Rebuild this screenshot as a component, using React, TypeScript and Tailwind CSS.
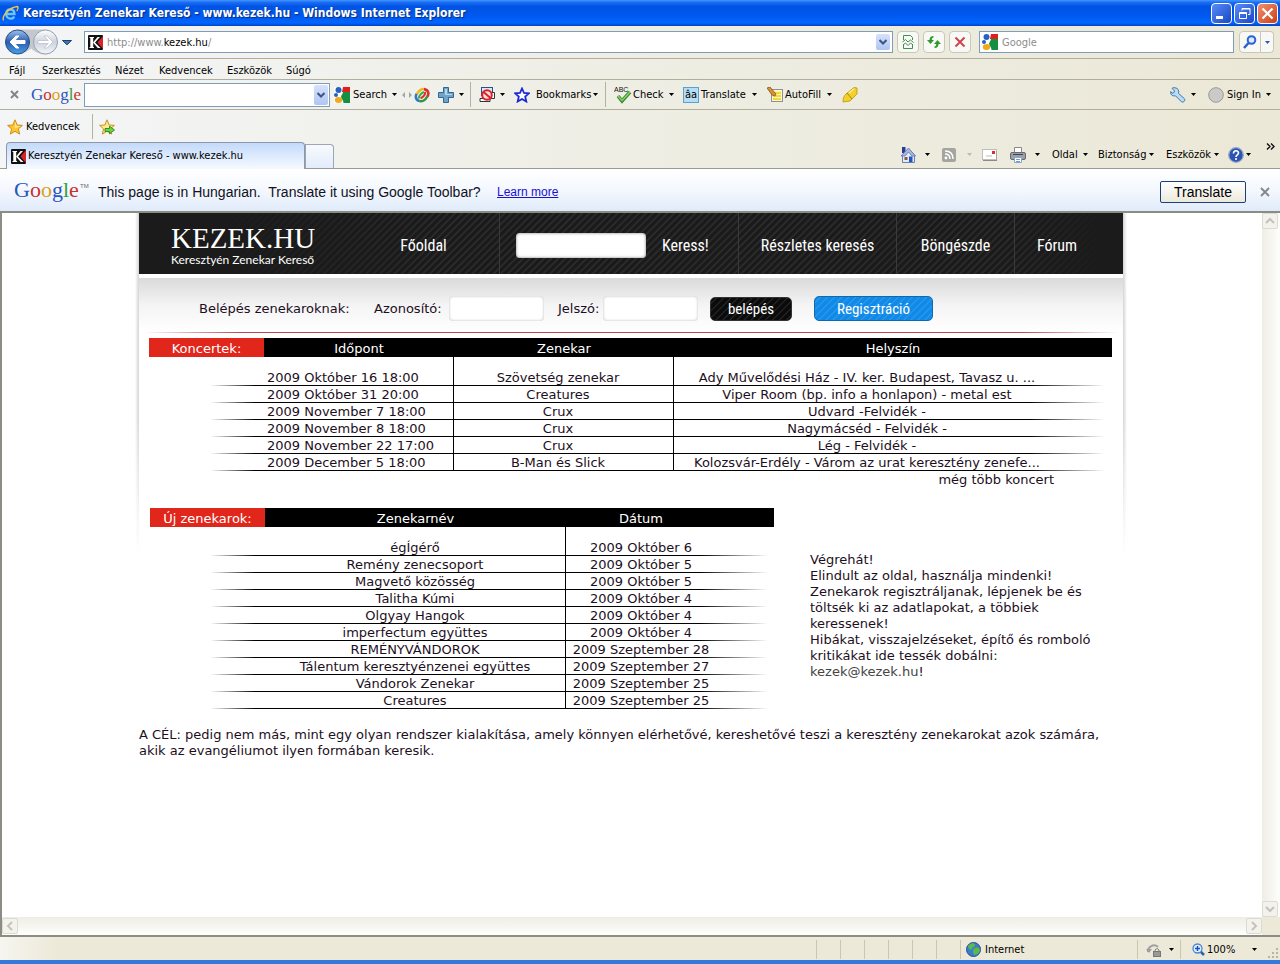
import type { ReactNode } from "react";

const concerts = [
  ["2009 Október 16 18:00", "Szövetség zenekar", "Ady Művelődési Ház - IV. ker. Budapest, Tavasz u. ..."],
  ["2009 Október 31 20:00", "Creatures", "Viper Room (bp. info a honlapon) - metal est"],
  ["2009 November 7 18:00", "Crux", "Udvard -Felvidék -"],
  ["2009 November 8 18:00", "Crux", "Nagymácséd - Felvidék -"],
  ["2009 November 22 17:00", "Crux", "Lég - Felvidék -"],
  ["2009 December 5 18:00", "B-Man és Slick", "Kolozsvár-Erdély - Várom az urat keresztény zenefe..."],
];

const bands = [
  ["égÍgérő", "2009 Október 6"],
  ["Remény zenecsoport", "2009 Október 5"],
  ["Magvető közösség", "2009 Október 5"],
  ["Talitha Kúmi", "2009 Október 4"],
  ["Olgyay Hangok", "2009 Október 4"],
  ["imperfectum együttes", "2009 Október 4"],
  ["REMÉNYVÁNDOROK", "2009 Szeptember 28"],
  ["Tálentum keresztyénzenei együttes", "2009 Szeptember 27"],
  ["Vándorok Zenekar", "2009 Szeptember 25"],
  ["Creatures", "2009 Szeptember 25"],
];

function Caret({ className = "text-black" }: { className?: string }) {
  return (
    <svg className={`h-[3px] w-[5px] shrink-0 ${className}`} viewBox="0 0 5 3" fill="currentColor">
      <path d="M0 0h5L2.5 3z" />
    </svg>
  );
}

function Tool({ w, label, children }: { w: string; label?: string; children?: ReactNode }) {
  return (
    <button type="button" aria-label={label} className={`flex h-full shrink-0 items-center whitespace-nowrap text-left ${w}`}>
      {children}
    </button>
  );
}

function Sep({ className = "mr-2" }: { className?: string }) {
  return <span className={`h-full w-px shrink-0 bg-[#b5b2a2] ${className}`} />;
}

function GoogleWord({ className }: { className: string }) {
  return (
    <span className={`font-['Liberation_Serif',serif] ${className}`}>
      <span className="text-[#2a56c0]">G</span>
      <span className="text-[#c8322f]">o</span>
      <span className="text-[#d8a31a]">o</span>
      <span className="text-[#2a56c0]">g</span>
      <span className="text-[#3a9a3a]">l</span>
      <span className="text-[#c8322f]">e</span>
    </span>
  );
}

function KIcon() {
  return (
    <svg className="size-[15px] shrink-0" viewBox="0 0 15 15">
      <rect width="15" height="15" rx="1" fill="#111" />
      <path d="M15 1v13L9.500 7.500z" fill="#d8232a" />
      <path d="M1.500 2h4.500v1h-.8v9h.8v1h-4.500v-1h.8V3h-.8z" fill="#fff" />
      <path d="M5 7.500 9.500 2H12L7 7.500l5.500 5.500h-2.700z" fill="#fff" />
    </svg>
  );
}

function GoogleIcon() {
  return (
    <svg className="size-4 shrink-0" viewBox="0 0 16 16">
      <rect width="16" height="16" fill="#fff" />
      <path d="M9 0h7v5H8z" fill="#e0201c" />
      <path d="M9 5h7v11H9.500c0-3-2-4-2.500-6 0-2 2-3 2-5z" fill="#149040" />
      <circle cx="4.500" cy="3" r="3" fill="#2563c0" />
      <circle cx="2" cy="8" r="2" fill="#2563c0" />
      <ellipse cx="4.500" cy="13" rx="3.700" ry="3" fill="#f0a81c" />
    </svg>
  );
}

function StarIcon({ arrow = false }: { arrow?: boolean }) {
  return (
    <svg className="size-4 shrink-0" viewBox="0 0 16 16">
      <path d="M8 .8 10.200 6l5.200.4-4 3.500 1.300 5.200L8 12.300l-4.700 2.800 1.300-5.200-4-3.500L5.800 6z" fill={arrow ? "#fbe88a" : "#ffc52a"} stroke="#c98410" strokeWidth=".9" />
      {!arrow && <path d="M8 2.500 9.500 6.800l4 .4L8 9.500z" fill="#ffe792" />}
      {arrow && <path d="M6 9.500h4.500V7.200L15.500 11l-5 3.800v-2.300H6z" fill="#6fd04a" stroke="#2a8a1c" strokeWidth=".9" />}
    </svg>
  );
}

function DropButton({ label }: { label: string }) {
  return (
    <button type="button" aria-label={label} className="flex w-[14px] shrink-0 items-center justify-center self-stretch rounded-xs bg-linear-to-b from-[#d6e2fc] to-[#b0c5f4]">
      <svg className="h-[6px] w-2" viewBox="0 0 8 6" fill="none" stroke="#3d5580" strokeWidth="2">
        <path d="m.5 1 3.500 3.500L7.500 1" />
      </svg>
    </button>
  );
}

function ScrollButton({ label, d }: { label: string; d: string }) {
  return (
    <button type="button" aria-label={label} className="flex size-4 shrink-0 items-center justify-center rounded-xs border border-[#dddbd0] bg-[#f3f2ec]">
      <svg className="size-[10px]" viewBox="0 0 10 10" fill="none" stroke="#c4c3ba" strokeWidth="2">
        <path d={d} />
      </svg>
    </button>
  );
}

function TitleBar() {
  return (
    <header className="flex h-[26px] items-center gap-1 bg-[linear-gradient(#3f97ff_0%,#1a6bf5_10%,#0054e3_25%,#0058ee_60%,#0066ff_88%,#0042c4_100%)] pr-[2px] pl-[2px]">
      <svg className="size-[17px]" viewBox="0 0 17 17" fill="none">
        <path d="M4 9h8.500c0-3-1.800-4.500-4.200-4.500S4.200 6.300 4.200 9s1.800 4.600 4.300 4.600c1.800 0 3-.7 3.700-2.200" stroke="#6cc4f8" strokeWidth="2.300" />
        <path d="M1.500 15.500C-.5 11 7 2.500 15.500 1.500c1 1 .3 3-.8 4.500" stroke="#f5c642" strokeWidth="1.300" />
      </svg>
      <h1 className="flex-1 truncate font-['DejaVu_Sans_Condensed','DejaVu_Sans',sans-serif] text-xs font-bold text-white [text-shadow:1px_1px_1px_#0a2a80]">
        Keresztyén Zenekar Kereső - www.kezek.hu - Windows Internet Explorer
      </h1>
      <div className="flex gap-[2px]">
        <button type="button" aria-label="Kis méret" className="size-[21px] rounded-sm border border-white bg-linear-to-br from-[#5a8cf5] to-[#1a45c8]">
          <svg viewBox="0 0 19 19"><path d="M4 12h7v3H4z" fill="#fff" /></svg>
        </button>
        <button type="button" aria-label="Előző méret" className="size-[21px] rounded-sm border border-white bg-linear-to-br from-[#5a8cf5] to-[#1a45c8]">
          <svg viewBox="0 0 19 19" fill="none" stroke="#fff"><path d="M7 6.500V4.500h8v6h-2M7 5h8M4.500 8.500h7v6h-7zM4 9.500h8" /></svg>
        </button>
        <button type="button" aria-label="Bezárás" className="size-[21px] rounded-sm border border-white bg-linear-to-br from-[#f0906c] to-[#cc3a10]">
          <svg viewBox="0 0 19 19" stroke="#fff" strokeWidth="2.200"><path d="m4.500 4.500 10 10m0-10-10 10" /></svg>
        </button>
      </div>
    </header>
  );
}

function AddressRow() {
  const box = "flex h-[22px] shrink-0 items-center justify-center rounded-sm border border-[#c9c7ba] bg-[#f8f8f4]";
  return (
    <div className="flex h-[33px] items-center border-b border-[#b3ad9c] pr-[6px] pl-1">
      <div className="relative flex w-[58px] shrink-0">
        <svg className="h-7 w-[58px]" viewBox="0 0 58 28">
          <defs>
            <linearGradient id="back" x2="0" y2="1"><stop stopColor="#9cc2ee" /><stop offset=".5" stopColor="#2a5cae" /><stop offset="1" stopColor="#4aa0e8" /></linearGradient>
            <linearGradient id="fwd" x2="0" y2="1"><stop stopColor="#fff" /><stop offset=".5" stopColor="#ccd3dc" /><stop offset="1" stopColor="#f4f7fa" /></linearGradient>
          </defs>
          <path d="M13 1.500h28a12 12 0 0 1 0 25q-7 0-14-6-7 6-14 6z" fill="#c3c8d0" />
          <circle cx="13.500" cy="14" r="12" fill="url(#back)" stroke="#2c4c80" />
          <path d="M6 14l6-6h3l-4.200 4.500H21v3H10.800L15 20h-3z" fill="#fff" stroke="#fff" />
          <circle cx="41.500" cy="14" r="12" fill="url(#fwd)" stroke="#98a2b0" />
          <path d="M49 14l-6-6h-3l4.200 4.500H34v3h10.200L40 20h3z" fill="#fff" stroke="#b4bcc8" strokeWidth=".7" />
        </svg>
        <button type="button" aria-label="Vissza" className="absolute inset-y-0 left-0 w-7" />
        <button type="button" aria-label="Előre" className="absolute inset-y-0 right-0 w-7" />
      </div>
      <button type="button" aria-label="Legutóbbi lapok" className="w-[22px] shrink-0">
        <svg className="h-[5px] w-[10px]" viewBox="0 0 10 5"><path d="M.5.5h9L5 4.800z" fill="#3d7bb5" stroke="#1c3f6e" /></svg>
      </button>
      <div className="flex h-[22px] min-w-0 flex-1 items-center gap-1 border border-[#7f9db9] bg-white py-[2px] pr-[2px] pl-[3px]">
        <KIcon />
        <div className="min-w-0 flex-1 pt-px text-[#8c8c8c]" role="textbox" aria-label="Cím" contentEditable suppressContentEditableWarning>
          http://www.<span className="text-black">kezek.hu</span>/
        </div>
        <DropButton label="Címlista" />
      </div>
      <button type="button" aria-label="Kompatibilitási nézet" className={`ml-1 w-[22px] ${box}`}>
        <svg className="size-[14px]" viewBox="0 0 14 14" fill="none" stroke="#3f9150"><path d="M2.500 5V.5h7l2 2V5M2.500 9v4.500h9V9M1.500 7l3-2.500L7 7l2.500-2 3 2.500M2 10l2.500-2L7 10.500 9.500 8l2.500 2" /></svg>
      </button>
      <button type="button" aria-label="Frissítés" className={`ml-1 w-[22px] ${box}`}>
        <svg className="size-4" viewBox="0 0 16 16" fill="#2f9a2c"><path d="M7.500 2C4.500 2 3.500 4 3.500 6H1l3.500 4L8 6H5.800c0-1.500.5-2.300 1.700-2.500zM8.500 14c3 0 4-2 4-4H15l-3.500-4L8 10h2.200c0 1.500-.5 2.300-1.700 2.500z" /></svg>
      </button>
      <button type="button" aria-label="Leállítás" className={`ml-1 w-[22px] ${box}`}>
        <svg className="size-3" viewBox="0 0 12 12" stroke="#cc4450" strokeWidth="2"><path d="m1.500 1.500 9 9m0-9-9 9" /></svg>
      </button>
      <label className="ml-2 flex h-[22px] w-[255px] items-center gap-1 border border-[#7f9db9] bg-white pl-[2px]">
        <GoogleIcon />
        <input aria-label="Keresés" placeholder="Google" className="min-w-0 flex-1 bg-transparent pt-px outline-none placeholder:text-[#8c8c8c]" />
      </label>
      <button type="button" aria-label="Keresés indítása" className={`ml-[5px] w-[22px] rounded-r-none ${box}`}>
        <svg className="size-[14px]" viewBox="0 0 14 14" fill="none" stroke="#2a62d8" strokeWidth="2"><circle cx="8.500" cy="5" r="3.800" fill="#dceafd" /><path d="m5.500 8-4.500 5" strokeWidth="2.600" /></svg>
      </button>
      <button type="button" aria-label="Keresési beállítások" className={`w-[13px] rounded-l-none border-l-0 ${box}`}>
        <Caret className="text-[#2a56c0]" />
      </button>
    </div>
  );
}

function MenuRow() {
  return (
    <nav className="flex h-[21px] items-center border-b border-[#b3ad9c] pt-1 pl-[9px]">
      <Tool w="w-[33px]">Fájl</Tool>
      <Tool w="w-[73px]">Szerkesztés</Tool>
      <Tool w="w-11">Nézet</Tool>
      <Tool w="w-[68px]">Kedvencek</Tool>
      <Tool w="w-[59px]">Eszközök</Tool>
      <Tool w="w-10">Súgó</Tool>
    </nav>
  );
}

function GoogleToolbar() {
  return (
    <div className="flex h-[30px] items-center border-b border-[#b3ad9c] py-[2px] pr-1 pl-[10px]">
      <Tool w="w-[21px]" label="Eszköztár bezárása">
        <svg className="size-[9px]" viewBox="0 0 9 9" stroke="#858585" strokeWidth="2"><path d="m1 1 7 7m0-7L1 8" /></svg>
      </Tool>
      <Tool w="w-[53px]"><GoogleWord className="text-[17px] leading-5" /></Tool>
      <div className="flex h-6 w-[246px] shrink-0 items-center border border-[#7f9db9] bg-white p-px">
        <input aria-label="Google keresés" className="h-full min-w-0 flex-1 outline-none" />
        <DropButton label="Korábbi keresések" />
      </div>
      <Tool w="ml-1 w-[68px] gap-[3px]">
        <GoogleIcon /><span className="w-[36px]">Search</span><Caret />
      </Tool>
      <svg className="mr-px h-[6px] w-[10px] shrink-0" viewBox="0 0 10 6" fill="#a5a5a5"><path d="M3 0v6L0 3zM7 0v6l3-3z" /></svg>
      <Tool w="w-[25px] pl-px" label="Google+">
        <svg className="size-4" viewBox="0 0 16 16" fill="none" strokeWidth="2.600">
          <path d="M5.500 14C1.500 13 1 9 3 6.500" stroke="#2f7ad0" />
          <path d="M2.800 7C4.500 3.500 8 1.500 10.500 2.200" stroke="#f0b820" />
          <path d="M10 2.100c4.500.4 5.500 4.900 3 7.900" stroke="#d8322f" />
          <path d="M13.200 9.500c-1.700 3.500-5 5.500-8 4.400" stroke="#2f9a3a" />
          <path d="M5 11.500C4.500 9.500 7 6 10 5" stroke="#3aa84a" strokeWidth="2" />
          <path d="M11 4.800c.8 2.200-1.500 5.200-4.500 6.500" stroke="#d8322f" strokeWidth="2" />
        </svg>
      </Tool>
      <Tool w="w-8 gap-[5px]" label="Hozzáadás">
        <svg className="size-4" viewBox="0 0 16 16"><path d="M5.500.5h5v5h5v5h-5v5h-5v-5h-5v-5h5z" fill="#6ea3cc" stroke="#33658f" /><path d="M7 2h2v5h5v1H7z" fill="#b6d6ea" /></svg>
        <Caret />
      </Tool>
      <Sep />
      <Tool w="w-[35px] gap-[5px]" label="Előugró ablakok">
        <svg className="size-4" viewBox="0 0 16 16" fill="none"><rect x="2.500" y=".5" width="11" height="8" fill="#d8e8fa" stroke="#28528c" /><path d="M12 5.500h3.500v6H12M1 11.500h10v3H1z" fill="#fff" stroke="#333" /><circle cx="8" cy="8" r="4.800" fill="#fbdada" stroke="#d8222a" strokeWidth="2" /><path d="m4.500 5 7 6" stroke="#d8222a" strokeWidth="2" /></svg>
        <Caret />
      </Tool>
      <Tool w="w-[91px]">
        <svg className="size-4 shrink-0" viewBox="0 0 16 16"><path d="M8 1.500 10 6l4.800.4-3.600 3.200 1.100 4.900L8 12l-4.300 2.500 1.100-4.900L1.200 6.400 6 6z" fill="#fff" stroke="#1a28d8" strokeWidth="1.800" /></svg>
        <span className="ml-[6px] w-[57px]">Bookmarks</span><Caret />
      </Tool>
      <Sep />
      <Tool w="w-[69px]">
        <svg className="size-[18px] shrink-0" viewBox="0 0 18 18"><text x="0" y="6" fontSize="7" fontFamily="Liberation Sans" fill="#111">ABC</text><path d="m4 10 4 5 8-9" fill="none" stroke="#3c8a2c" strokeWidth="3.500" /><path d="m4 10 4 4.500L16 6" fill="none" stroke="#8fd070" strokeWidth="1.500" /></svg>
        <span className="ml-px w-9">Check</span><Caret />
      </Tool>
      <Tool w="w-[84px]">
        <span className="flex size-4 shrink-0 items-center justify-center border border-[#5c9fd0] bg-[#b8def6] leading-3">âa</span>
        <span className="ml-[2px] w-[51px]">Translate</span><Caret />
      </Tool>
      <Tool w="w-[75px]">
        <svg className="size-4 shrink-0" viewBox="0 0 16 16"><rect x="4.500" y="2.500" width="11" height="12" fill="#fff8b0" stroke="#8a8fa8" /><path d="M6 6h8M6 9h8M6 12h8" stroke="#f0d840" strokeWidth="2" /><path d="m0 1 3-1 6 7-1 2-3-1z" fill="#d89030" stroke="#7a4c18" strokeWidth=".7" /></svg>
        <span className="ml-[2px] w-[42px]">AutoFill</span><Caret />
      </Tool>
      <Tool w="w-5" label="Kiemelés">
        <svg className="size-4" viewBox="0 0 16 16"><path d="M1 15c0-4 1-6 3-8l8-6.500 3 .5v6L8 14z" fill="#f5cf2a" stroke="#b8960c" strokeWidth=".8" /><path d="m5 6 5 6" stroke="#a8860c" /><path d="m6.500 5.500 5-4 1 .5-5 4.500z" fill="#fff0a0" /></svg>
      </Tool>
      <div className="ml-auto flex h-full">
        <Tool w="w-[38px] gap-[5px]" label="Beállítások">
          <svg className="size-4" viewBox="0 0 16 16"><path d="M5 .8C3.500.5 2.500 1 2 1.300L4.500 4 3.800 5.800 2 6.200.8 4.500C0 7 2 9.500 5.500 8.800l6 6c2 1 4-1 3-3l-6-5.500C9.300 3.500 8 1 5 .8z" fill="#bcdcf4" stroke="#3b78ac" /></svg>
          <Caret />
        </Tool>
        <Tool w="w-[68px]">
          <svg className="size-4 shrink-0" viewBox="0 0 16 16"><circle cx="8" cy="8" r="7.300" fill="#cbcac6" stroke="#999" /></svg>
          <span className="ml-[3px] w-[39px]">Sign In</span><Caret />
        </Tool>
      </div>
    </div>
  );
}

function FavoritesRow() {
  return (
    <div className="flex h-8 items-center pt-1 pb-[3px] pl-[7px]">
      <Tool w="w-[85px] gap-[3px]"><StarIcon />Kedvencek</Tool>
      <Sep className="mr-[6px]" />
      <Tool w="w-5" label="Hozzáadás a Kedvencekhez"><StarIcon arrow /></Tool>
    </div>
  );
}

function TabRow() {
  return (
    <div className="flex h-[27px] items-end border-b border-[#9a9a96] pr-1 pl-[6px]">
      <div className="-mb-px flex h-[27px] w-[299px] shrink-0 items-center gap-[2px] rounded-t-sm border border-b-0 border-[#8d97a8] bg-linear-to-b from-[#c3dafa] to-[#f6faff] pl-1">
        <KIcon />
        Keresztyén Zenekar Kereső - www.kezek.hu
      </div>
      <button type="button" aria-label="Új lap" className="h-6 w-[29px] shrink-0 rounded-tr-sm border border-b-0 border-[#9aa6b8] bg-linear-to-b from-[#f8fafe] to-[#e2ecfa]" />
      <div className="ml-auto flex h-[27px] items-center">
        <Tool w="w-[42px] gap-[9px]" label="Kezdőlap">
          <svg className="size-4" viewBox="0 0 16 16"><path d="M2 0h3.500v6H2z" fill="#2a3c90" /><path d="M2.500 8v7.500h12V8L8.500 2z" fill="#e4eaf6" stroke="#6a80b0" /><path d="M8.500 1 1 9h4l3.500-4L12 9h3.500z" fill="#a8b8dc" stroke="#5a74b4" strokeWidth=".8" /><path d="M9 9.500h3.500V15H9z" fill="#1c58c0" /><path d="M4.500 10h3v3h-3z" fill="#8a5a40" /></svg>
          <Caret />
        </Tool>
        <Tool w="w-10 gap-[11px]" label="Hírcsatornák">
          <svg className="size-[14px]" viewBox="0 0 14 14" fill="none" stroke="#fff" strokeWidth="1.500"><rect width="14" height="14" rx="2" fill="#a5a5a0" stroke="none" /><path d="M3 3c5 0 8 3 8 8M3 6c3 0 5 2 5 5" /><circle cx="4" cy="10" r=".7" /></svg>
          <Caret className="text-[#bdbbb0]" />
        </Tool>
        <Tool w="w-7" label="Levelek">
          <svg className="h-3 w-[15px]" viewBox="0 0 15 12"><rect x=".5" y=".5" width="14" height="10" fill="#fff" stroke="#c0beb6" /><path d="M1 11.500h14V2" stroke="#8c8a84" fill="none" /><path d="M10 2h3v3h-3z" fill="#d82a3a" /><path d="M4 7h6" stroke="#bbb" /></svg>
        </Tool>
        <Tool w="w-[42px] gap-[9px]" label="Nyomtatás">
          <svg className="size-4" viewBox="0 0 16 16"><path d="M4.500.5h7v6h-7z" fill="#fff" stroke="#888" /><rect x=".5" y="5.500" width="15" height="7" rx="1.500" fill="#9a9fa8" stroke="#666b74" /><path d="M3 7.500h10" stroke="#444" /><path d="M4.500 10.500h7v5h-7z" fill="#fff" stroke="#8aa4c4" /><path d="M6 12.500h4M6 14.500h4" stroke="#6aa0d8" /></svg>
          <Caret />
        </Tool>
        <Tool w="w-[46px]"><span className="w-[31px]">Oldal</span><Caret /></Tool>
        <Tool w="w-[68px]"><span className="w-[51px]">Biztonság</span><Caret /></Tool>
        <Tool w="w-[62px]"><span className="w-12">Eszközök</span><Caret /></Tool>
        <Tool w="w-[38px] gap-[2px]" label="Súgó">
          <svg className="size-4" viewBox="0 0 16 16"><circle cx="8" cy="8" r="7.300" fill="#2a55b0" stroke="#98a8c8" strokeWidth="1.300" /><path d="M5.500 6.500C5.500 3 10.500 3 10.500 6c0 1.800-2.500 1.800-2.500 4M8 11v2" fill="none" stroke="#fff" strokeWidth="1.600" /></svg>
          <Caret />
        </Tool>
        <button type="button" aria-label="További gombok" className="mb-4 w-[10px]">
          <svg className="h-[7px] w-[9px]" viewBox="0 0 9 7" fill="none" stroke="#111" strokeWidth="1.400"><path d="m1 .5 3 3-3 3m4-6 3 3-3 3" /></svg>
        </button>
      </div>
    </div>
  );
}

function TranslateBar() {
  return (
    <div className="flex h-11 items-center border-b-2 border-[#8b8d85] bg-linear-to-b from-white via-[#f4f8fe] to-[#e0ebfa] pt-1 pr-[10px] pl-[14px] font-['Liberation_Sans',Arial,sans-serif] text-sm text-[#111122]">
      <GoogleWord className="w-[66px] pb-1 text-[22px] leading-7" />
      <span className="mb-3 w-[18px] text-[6px] text-[#666]">TM</span>
      <p className="min-w-[393px] whitespace-pre">This page is in Hungarian.  Translate it using Google Toolbar?</p>
      <a href="#more" className="ml-[6px] text-xs text-[#1a10d0] underline">Learn more</a>
      <button type="button" className="ml-auto h-[22px] w-[86px] rounded-xs border border-[#1c3f7c] bg-linear-to-b from-white to-[#ece9dc] leading-5 text-black">Translate</button>
      <button type="button" aria-label="Sáv bezárása" className="ml-[14px]">
        <svg className="size-[10px]" viewBox="0 0 10 10" stroke="#858585" strokeWidth="1.800"><path d="m1 1 8 8m0-8L1 9" /></svg>
      </button>
    </div>
  );
}

const headLink = "flex h-full shrink-0 items-center justify-center border-[#3a3a3a] pt-1";

function SiteHeader() {
  return (
    <div className="flex h-[61px] bg-[#1b1b1b] bg-[linear-gradient(90deg,#1b1b1b_8%,transparent_30%,transparent_88%,#1b1b1b_98%),repeating-linear-gradient(135deg,#1a1a1a_0px,#1a1a1a_2px,#2f2f2f_4px,#1a1a1a_5px)] font-['Roboto_Condensed','Open_Sans_Condensed','DejaVu_Sans_Condensed',sans-serif] text-base text-white">
      <div className="w-[209px] shrink-0 pt-[10px] pl-8">
        <div className="font-['Liberation_Serif',serif] text-[29px] leading-[30px]">KEZEK.HU</div>
        <div className="font-['Lato',sans-serif] text-xs leading-[14px] whitespace-nowrap">Keresztyén Zenekar Kereső</div>
      </div>
      <nav className="flex items-center">
        <a href="#home" className={`w-[152px] border-r ${headLink}`}>Főoldal</a>
        <form className="flex h-full w-[239px] items-center border-r border-[#3a3a3a] pt-1 pl-4" onSubmit={(e) => e.preventDefault()}>
          <input aria-label="Keresés az oldalon" className="h-[25px] w-[130px] rounded-sm bg-white px-2 text-black shadow-[inset_0_0_3px_#777]" />
          <button type="submit" className="ml-4">Keress!</button>
        </form>
        <a href="#search" className={`w-[158px] border-r ${headLink}`}>Részletes keresés</a>
        <a href="#browse" className={`w-[118px] border-r ${headLink}`}>Böngészde</a>
        <a href="#forum" className={`w-[84px] ${headLink}`}>Fórum</a>
      </nav>
    </div>
  );
}

function LoginRow() {
  const field = "h-[25px] w-[95px] rounded-sm bg-white px-1 shadow-[inset_0_0_3px_#bbb]";
  const button = "rounded-[5px] border font-['Roboto_Condensed','Open_Sans_Condensed','DejaVu_Sans_Condensed',sans-serif] text-[15px] text-white";
  return (
    <form className="mt-1 flex h-[54px] items-center bg-linear-to-b from-[#dadada] via-[#f4f4f4] to-white pt-[7px] pl-[60px]" onSubmit={(e) => e.preventDefault()}>
      <span className="w-[175px]">Belépés zenekaroknak:</span>
      <label htmlFor="user" className="w-[75px]">Azonosító:</label>
      <input id="user" className={field} />
      <label htmlFor="pass" className="ml-[14px] w-[45px]">Jelszó:</label>
      <input id="pass" type="password" className={field} />
      <button type="submit" className={`ml-3 h-6 w-[82px] border-[#333] bg-[repeating-linear-gradient(135deg,#0b0b0b_0px,#0b0b0b_3px,#2a2a2a_4px,#0b0b0b_5px)] leading-5 ${button}`}>belépés</button>
      <button type="button" className={`ml-[22px] h-[25px] w-[119px] border-[#1268ad] bg-[repeating-linear-gradient(135deg,#1189e6_0px,#1189e6_3px,#2d9cf0_4px,#1189e6_5px)] leading-5 ${button}`}>Regisztráció</button>
    </form>
  );
}

function ConcertTable() {
  return (
    <table className="ml-[10px] w-[963px] table-fixed border-separate border-spacing-0">
      <thead className="bg-black text-white">
        <tr className="h-[19px]">
          <th scope="col" className="w-[115px] bg-[#e1261c] p-0 pt-[2px] font-normal">Koncertek:</th>
          <th scope="col" className="w-[190px] p-0 pt-[2px] font-normal">Időpont</th>
          <th scope="col" className="w-[220px] p-0 pt-[2px] font-normal">Zenekar</th>
          <th scope="col" className="p-0 pt-[2px] font-normal">Helyszín</th>
        </tr>
      </thead>
      <tbody className="text-center whitespace-nowrap">
        {concerts.map(([date, band, place], i) => (
          <tr key={date} className="bg-[linear-gradient(90deg,transparent,#000_45px,#000_820px,transparent)] bg-[length:895px_1px] bg-[position:61px_100%] bg-no-repeat">
            <td className="p-0" />
            <td className={`border-r border-black p-0 pl-[3px] text-left ${i === 0 ? "pt-[13px]" : "pt-px"}`}>{date}</td>
            <td className="border-r border-black p-0 pt-px pr-[11px] align-bottom">{band}</td>
            <td className="p-0 pt-px pr-[52px] align-bottom">{place}</td>
          </tr>
        ))}
      </tbody>
    </table>
  );
}

function BandTable() {
  return (
    <table className="ml-[11px] w-[624px] shrink-0 table-fixed border-separate border-spacing-0">
      <thead className="bg-black text-white">
        <tr className="h-[19px]">
          <th scope="col" className="w-[115px] bg-[#e1261c] p-0 pt-[2px] font-normal">Új zenekarok:</th>
          <th scope="col" className="w-[301px] p-0 pt-[2px] font-normal">Zenekarnév</th>
          <th scope="col" className="p-0 pt-[2px] pr-[58px] font-normal">Dátum</th>
        </tr>
      </thead>
      <tbody className="text-center whitespace-nowrap">
        {bands.map(([name, date], i) => (
          <tr key={name} className="bg-[linear-gradient(90deg,transparent,#000_45px,#000_490px,transparent)] bg-[length:558px_1px] bg-[position:60px_100%] bg-no-repeat">
            <td className="p-0" />
            <td className={`border-r border-black p-0 ${i === 0 ? "pt-[13px]" : "pt-px"}`}>{name}</td>
            <td className="p-0 pt-px pr-[58px] align-bottom">{date}</td>
          </tr>
        ))}
      </tbody>
    </table>
  );
}

function Site() {
  return (
    <main className="relative mx-auto w-full max-w-[984px] font-['DejaVu_Sans',Verdana,sans-serif] text-[13px] leading-4 text-[#1c0f22]">
      <div className="absolute top-0 -left-1 h-[342px] w-1 bg-linear-to-l from-[#d4d4d4] to-white mask-b-from-60%" />
      <div className="absolute top-0 -right-1 h-[342px] w-1 bg-linear-to-r from-[#d4d4d4] to-white mask-b-from-60%" />
      <SiteHeader />
      <LoginRow />
      <div className="mx-1 mb-[5px] h-px bg-[linear-gradient(90deg,transparent,#c0484c_10%,#c0484c_90%,transparent)]" />
      <ConcertTable />
      <div className="pt-px pr-[69px] text-right"><a href="#concerts">még több koncert</a></div>
      <div className="mt-5 flex">
        <BandTable />
        <div className="ml-9 pt-11 whitespace-nowrap">
          <p>Végrehát!</p>
          <p>Elindult az oldal, használja mindenki!</p>
          <p>Zenekarok regisztráljanak, lépjenek be és<br />töltsék ki az adatlapokat, a többiek<br />keressenek!</p>
          <p>Hibákat, visszajelzéseket, építő és romboló<br />kritikákat ide tessék dobálni:</p>
          <p><a href="mailto:kezek@kezek.hu" className="text-[#444]">kezek@kezek.hu</a>!</p>
        </div>
      </div>
      <p className="mt-[18px]">
        A CÉL: pedig nem más, mint egy olyan rendszer kialakítása, amely könnyen elérhetővé, kereshetővé teszi a keresztény zenekarokat azok számára, akik az evangéliumot ilyen formában keresik.
      </p>
    </main>
  );
}

function StatusBar() {
  return (
    <footer className="flex h-[23px] items-center justify-end bg-[linear-gradient(90deg,#f6f5ef,#ece9d8_60px)] pt-[3px] pb-px">
      {[0, 1, 2, 3, 4, 5].map((i) => (
        <span key={i} className="h-full w-6 border-l border-[#c9c6b4]" />
      ))}
      <div className="flex h-full w-[177px] items-center gap-1 border-l border-[#c9c6b4] pl-[5px]">
        <svg className="size-[15px]" viewBox="0 0 15 15"><circle cx="7.500" cy="7.500" r="7" fill="#3a7cd0" stroke="#245090" /><path d="M2 4c3-4 7-3 7-1s-3 2-3 4-4 0-4-3zM9 6c3-1 5 0 5 2s-3 5-5 5-3-6 0-7z" fill="#5cba48" /></svg>
        Internet
      </div>
      <button type="button" aria-label="Védett mód" className="flex h-full w-[43px] items-center gap-[7px] border-l border-[#c9c6b4] pl-2">
        <svg className="size-4" viewBox="0 0 16 16"><path d="M2 10a6 6 0 0 1 10-5" fill="none" stroke="#a0a0a0" strokeWidth="2" /><path d="M0 7h6l-3 4z" fill="#a0a0a0" /><rect x="7.500" y="9.500" width="7" height="5" fill="#999" stroke="#777" /><path d="M9 9c0-3 4-3 4 0" fill="none" stroke="#777" /></svg>
        <Caret />
      </button>
      <button type="button" className="flex h-full w-[100px] items-center border-l border-[#c9c6b4] pl-[11px] text-left">
        <svg className="size-[13px]" viewBox="0 0 13 13"><path d="m8 8 4 4" stroke="#2a62b0" strokeWidth="2.500" /><circle cx="5.500" cy="5.500" r="4.500" fill="#e0effc" stroke="#4a86d0" strokeWidth="1.300" /><path d="M5.500 3v5M3 5.500h5" stroke="#1d50c0" strokeWidth="1.500" /></svg>
        <span className="ml-[2px] w-[45px]">100%</span>
        <Caret />
        <svg className="mt-2 mr-px ml-auto size-[11px]" viewBox="0 0 11 11" fill="#b8b4a2"><path d="M8 0h2v2H8zM4 4h2v2H4zM8 4h2v2H8zM0 8h2v2H0zM4 8h2v2H4zM8 8h2v2H8z" /></svg>
      </button>
    </footer>
  );
}

export default function App() {
  return (
    <div className="flex min-h-screen flex-col bg-white font-['DejaVu_Sans_Condensed','DejaVu_Sans',Tahoma,sans-serif] text-[11px] leading-[14px] text-black">
      <TitleBar />
      <div className="bg-[linear-gradient(90deg,#f4f5f7,#eeede2_55%,#ebe8d7)]">
        <AddressRow />
        <MenuRow />
        <GoogleToolbar />
        <FavoritesRow />
        <TabRow />
      </div>
      <TranslateBar />
      <div className="flex flex-1 border-l-2 border-[#8b8d85]">
        <div className="min-w-0 flex-1 pr-[2px]">
          <Site />
        </div>
        <div className="flex w-[18px] shrink-0 flex-col justify-between bg-[linear-gradient(90deg,#eeede5,#fefefb)] pr-[2px]">
          <ScrollButton label="Görgetés fel" d="m1 7 4-4 4 4" />
          <ScrollButton label="Görgetés le" d="m1 3 4 4 4-4" />
        </div>
      </div>
      <div className="flex h-5 shrink-0 items-center border-b-2 border-l-2 border-[#8b8d85] bg-linear-to-b from-[#eeede5] to-[#fefefb]">
        <ScrollButton label="Görgetés balra" d="M7 1 3 5l4 4" />
        <div className="flex-1" />
        <ScrollButton label="Görgetés jobbra" d="m3 1 4 4-4 4" />
        <div className="h-full w-[18px] bg-[#ece9d8]" />
      </div>
      <StatusBar />
      <div className="h-1 shrink-0 bg-[#3579dc]" />
    </div>
  );
}
